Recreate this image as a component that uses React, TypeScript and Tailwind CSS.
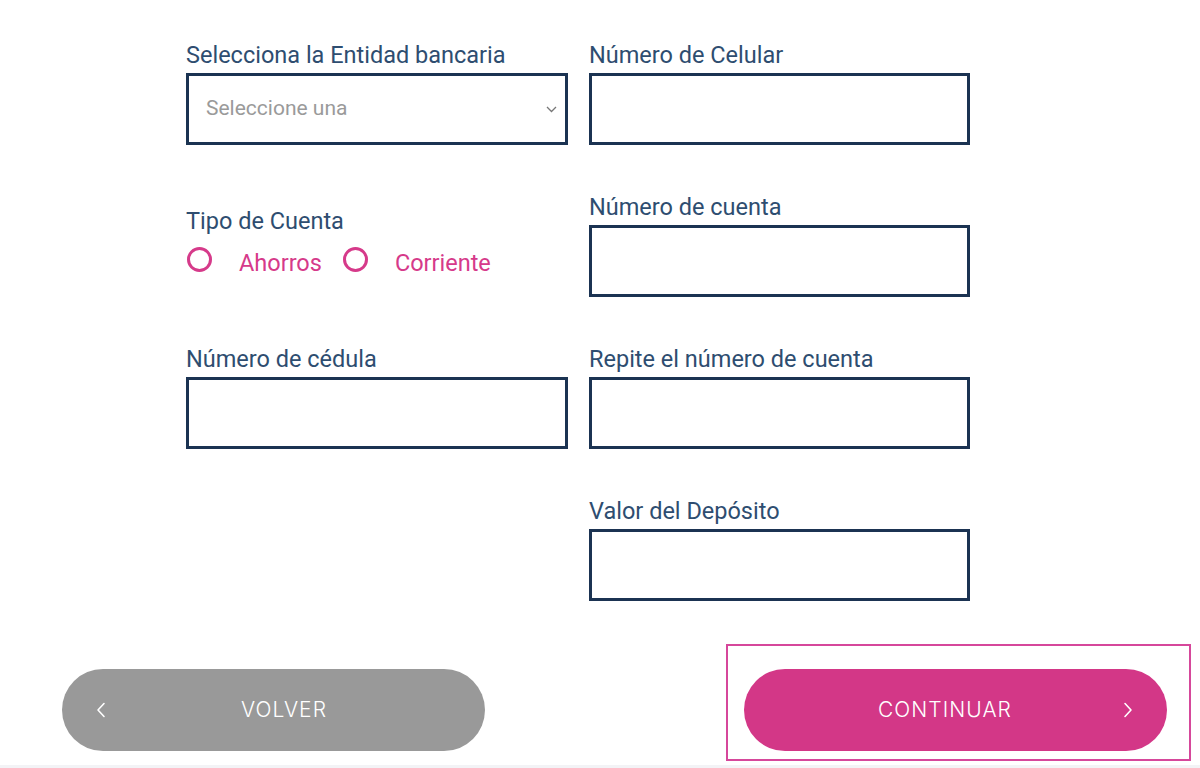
import { ReactNode } from 'react'

const labelCls = "block text-[23.5px] leading-[28px] text-[#2e4d70] mb-[4px]"
const inputCls = "block w-full h-[72px] border-[3px] border-[#1b3352] bg-white outline-none"

function Field({ label, children }: { label: string; children?: ReactNode }) {
  return (
    <div>
      <label className={labelCls}>{label}</label>
      {children ?? <input type="text" className={inputCls} />}
    </div>
  )
}

function Radio({ label }: { label: string }) {
  return (
    <label className="flex items-center">
      <span className="w-[25px] h-[25px] rounded-full border-[3px] border-[#d63a8a]" />
      <span className="ml-[27px] mt-[8px] text-[23.5px] leading-[28px] text-[#d63a8a]">{label}</span>
    </label>
  )
}

function Chevron({ dir }: { dir: 'left' | 'right' }) {
  return (
    <svg width="10" height="16" viewBox="0 0 10 16" fill="none" stroke="white" strokeWidth="1.6" strokeLinecap="round" strokeLinejoin="round">
      {dir === 'left' ? <path d="M8 1.5 2 8l6 6.5" /> : <path d="M2 1.5 8 8l-6 6.5" />}
    </svg>
  )
}

export default function App() {
  return (
    <div className="w-[1200px] h-[768px] overflow-hidden bg-white" style={{ fontFamily: 'Roboto, "Noto Sans", sans-serif' }}>
      {/* Form grid */}
      <div className="pt-[41px] pl-[186px]">
        <div className="grid grid-cols-[382px_381px] gap-x-[21px] gap-y-[48px]">
          <Field label="Selecciona la Entidad bancaria">
            <div className="relative">
              <select className={`${inputCls} appearance-none pl-[17px] text-[21px] text-[#9a9a9a]`} defaultValue="">
                <option value="">Seleccione una</option>
              </select>
              <svg className="absolute right-[11px] top-[33px]" width="11" height="7" viewBox="0 0 11 7" fill="none" stroke="#777" strokeWidth="1.3">
                <path d="M1 1l4.5 4.5L10 1" />
              </svg>
            </div>
          </Field>
          <Field label="Número de Celular" />

          <div className="pt-[14px]">
            <p className="text-[23.5px] leading-[28px] text-[#2e4d70]">Tipo de Cuenta</p>
            <div className="flex items-center gap-[21px] mt-[6px] pl-[1px]">
              <Radio label="Ahorros" />
              <Radio label="Corriente" />
            </div>
          </div>
          <Field label="Número de cuenta" />

          <Field label="Número de cédula" />
          <Field label="Repite el número de cuenta" />

          <div />
          <Field label="Valor del Depósito" />
        </div>
      </div>

      {/* Buttons */}
      <div className="flex items-start pl-[62px] mt-[43px]" style={{ fontFamily: 'Inter, "Open Sans", sans-serif' }}>
        <button className="mt-[25px] w-[423px] h-[82px] rounded-full bg-[#999999] text-white text-[21px] font-light tracking-[0.05em] relative flex items-center justify-center pl-[21px]">
          <span className="absolute left-[34px] top-[33px]"><Chevron dir="left" /></span>
          VOLVER
        </button>
        <div className="ml-[241px] border-2 border-[#d6479b] pt-[23px] pl-[16px] pr-[22px] pb-[8px]">
          <button className="w-[423px] h-[82px] rounded-full bg-[#d33787] text-white text-[21px] font-light tracking-[0.05em] relative flex items-center justify-center pr-[21px]">
            CONTINUAR
            <span className="absolute right-[34px] top-[33px]"><Chevron dir="right" /></span>
          </button>
        </div>
      </div>
      <div className="mt-[4px] h-[4px] bg-[#f3f3f6]" />
    </div>
  )
}
